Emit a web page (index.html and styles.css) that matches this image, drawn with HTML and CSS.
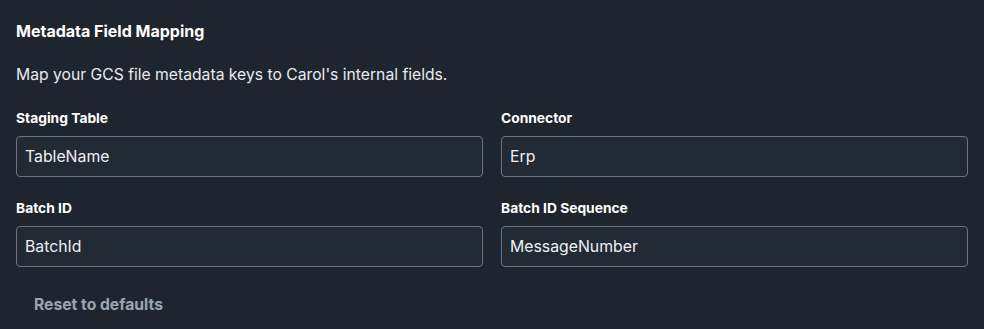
FILE: index.html
```html
<!DOCTYPE html>
<html>
<head>
    <title>Metadata Field Mapping</title>
    <meta name="viewport" content="width=device-width, initial-scale=1.0">
    <link rel="stylesheet" href="styles.css">
</head>
<body>
    <div class="panel">
        <h2 class="panel-title">Metadata Field Mapping</h2>
        <p class="panel-desc">Map your GCS file metadata keys to Carol's internal fields.</p>

        <div class="field-grid">
            <div class="field">
                <label class="field-label">Staging Table</label>
                <input class="field-input" type="text" value="TableName">
            </div>
            <div class="field">
                <label class="field-label">Connector</label>
                <input class="field-input" type="text" value="Erp">
            </div>
            <div class="field">
                <label class="field-label">Batch ID</label>
                <input class="field-input" type="text" value="BatchId">
            </div>
            <div class="field">
                <label class="field-label">Batch ID Sequence</label>
                <input class="field-input" type="text" value="MessageNumber">
            </div>
        </div>

        <button class="reset-btn">Reset to defaults</button>
    </div>
</body>
</html>
```

FILE: styles.css
```css
* {
    box-sizing: border-box;
    margin: 0;
    padding: 0;
}

body {
    background-color: #1f252e;
    color: #f1f3f5;
    font-family: Inter, "Noto Sans", sans-serif;
    height: 329px;
    overflow: hidden;
}

.panel {
    padding: 20px 16px;
}

.panel-title {
    font-size: 16px;
    font-weight: 700;
    line-height: 22px;
    color: #ffffff;
}

.panel-desc {
    margin-top: 22px;
    font-size: 15.7px;
    line-height: 22px;
    color: #e8ebee;
}

.field-grid {
    display: grid;
    grid-template-columns: 1fr 1fr;
    column-gap: 18px;
    row-gap: 21px;
    margin-top: 22px;
}

.field {
    display: flex;
    flex-direction: column;
}

.field-label {
    font-size: 13.8px;
    font-weight: 700;
    line-height: 20px;
    color: #ffffff;
    margin-bottom: 8px;
}

.field-input {
    height: 41px;
    background: #222a34;
    border: 1px solid #6b7480;
    border-radius: 4px;
    padding: 0 8px;
    font-family: Inter, "Noto Sans", sans-serif;
    font-size: 15.8px;
    color: #eef0f2;
    outline: none;
}

.reset-btn {
    display: block;
    margin-top: 19px;
    height: 36px;
    padding: 0 18px;
    background: none;
    border: none;
    font-family: Inter, "Noto Sans", sans-serif;
    font-size: 15.7px;
    font-weight: 700;
    color: #9aa5b1;
    cursor: pointer;
}
```
